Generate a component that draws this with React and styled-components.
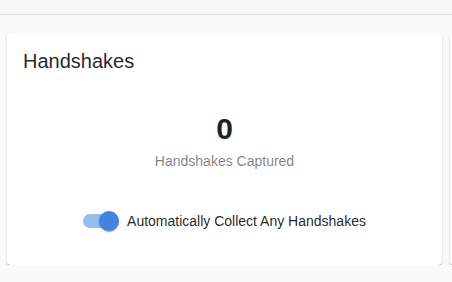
import React, {useState} from 'react';
import styled, {createGlobalStyle} from 'styled-components';

const GlobalStyle = createGlobalStyle`
  html, body {
    margin: 0;
    padding: 0;
    background: #fafafa;
    font-family: "Liberation Sans", Arial, Helvetica, sans-serif;
    overflow: hidden;
  }
`;

const TopBar = styled.div`
  height: 14px;
  background: #f7f7f7;
  border-bottom: 1px solid #dedede;
`;

const CardRow = styled.div`
  display: flex;
  gap: 8px;
  padding: 18px 0 0 7px;
`;

const Card = styled.div`
  flex: 0 0 auto;
  width: ${props => props.width || 435}px;
  height: 232px;
  box-sizing: border-box;
  padding: 16px;
  background: #fff;
  border-radius: 4px;
  box-shadow: 0px 2px 1px -1px rgba(0, 0, 0, 0.2),
    0px 1px 1px 0px rgba(0, 0, 0, 0.14), 0px 1px 3px 0px rgba(0, 0, 0, 0.12);
  display: flex;
  flex-direction: column;
`;

const Title = styled.h2`
  margin: 0;
  font-size: 20px;
  line-height: 24px;
  font-weight: 400;
  color: rgba(0, 0, 0, 0.87);
`;

const Stat = styled.div`
  margin-top: 38px;
  display: flex;
  flex-direction: column;
  align-items: center;
`;

const Count = styled.div`
  font-size: 30px;
  line-height: 36px;
  font-weight: 700;
  color: #212121;
`;

const Caption = styled.div`
  margin-top: 4px;
  font-size: 14px;
  line-height: 20px;
  color: rgba(0, 0, 0, 0.5);
`;

const ToggleRow = styled.label`
  margin-top: 31px;
  height: 38px;
  display: flex;
  align-items: center;
  justify-content: center;
  gap: 8px;
  cursor: pointer;
`;

const Track = styled.span`
  position: relative;
  width: 34px;
  height: 14px;
  margin-right: 2px;
  border-radius: 7px;
  background: ${props => (props.on ? 'rgba(63, 132, 224, 0.55)' : 'rgba(0, 0, 0, 0.38)')};
`;

const Thumb = styled.span`
  position: absolute;
  top: -3px;
  left: ${props => (props.on ? 16 : -2)}px;
  width: 20px;
  height: 20px;
  border-radius: 50%;
  background: ${props => (props.on ? '#3f84e0' : '#fafafa')};
  box-shadow: 0px 2px 1px -1px rgba(0, 0, 0, 0.2),
    0px 1px 1px 0px rgba(0, 0, 0, 0.14), 0px 1px 3px 0px rgba(0, 0, 0, 0.12);
  transition: left 150ms;
`;

const Label = styled.span`
  font-size: 14px;
  line-height: 20px;
  color: rgba(0, 0, 0, 0.87);
`;

export default function App() {
  const [autoCollect, setAutoCollect] = useState(true);

  return (
    <>
      <GlobalStyle />
      <TopBar />
      <CardRow>
        <Card>
          <Title>Handshakes</Title>
          <Stat>
            <Count>0</Count>
            <Caption>Handshakes Captured</Caption>
          </Stat>
          <ToggleRow onClick={() => setAutoCollect(!autoCollect)}>
            <Track on={autoCollect}>
              <Thumb on={autoCollect} />
            </Track>
            <Label>Automatically Collect Any Handshakes</Label>
          </ToggleRow>
        </Card>
        <Card width={435} />
      </CardRow>
    </>
  );
}
